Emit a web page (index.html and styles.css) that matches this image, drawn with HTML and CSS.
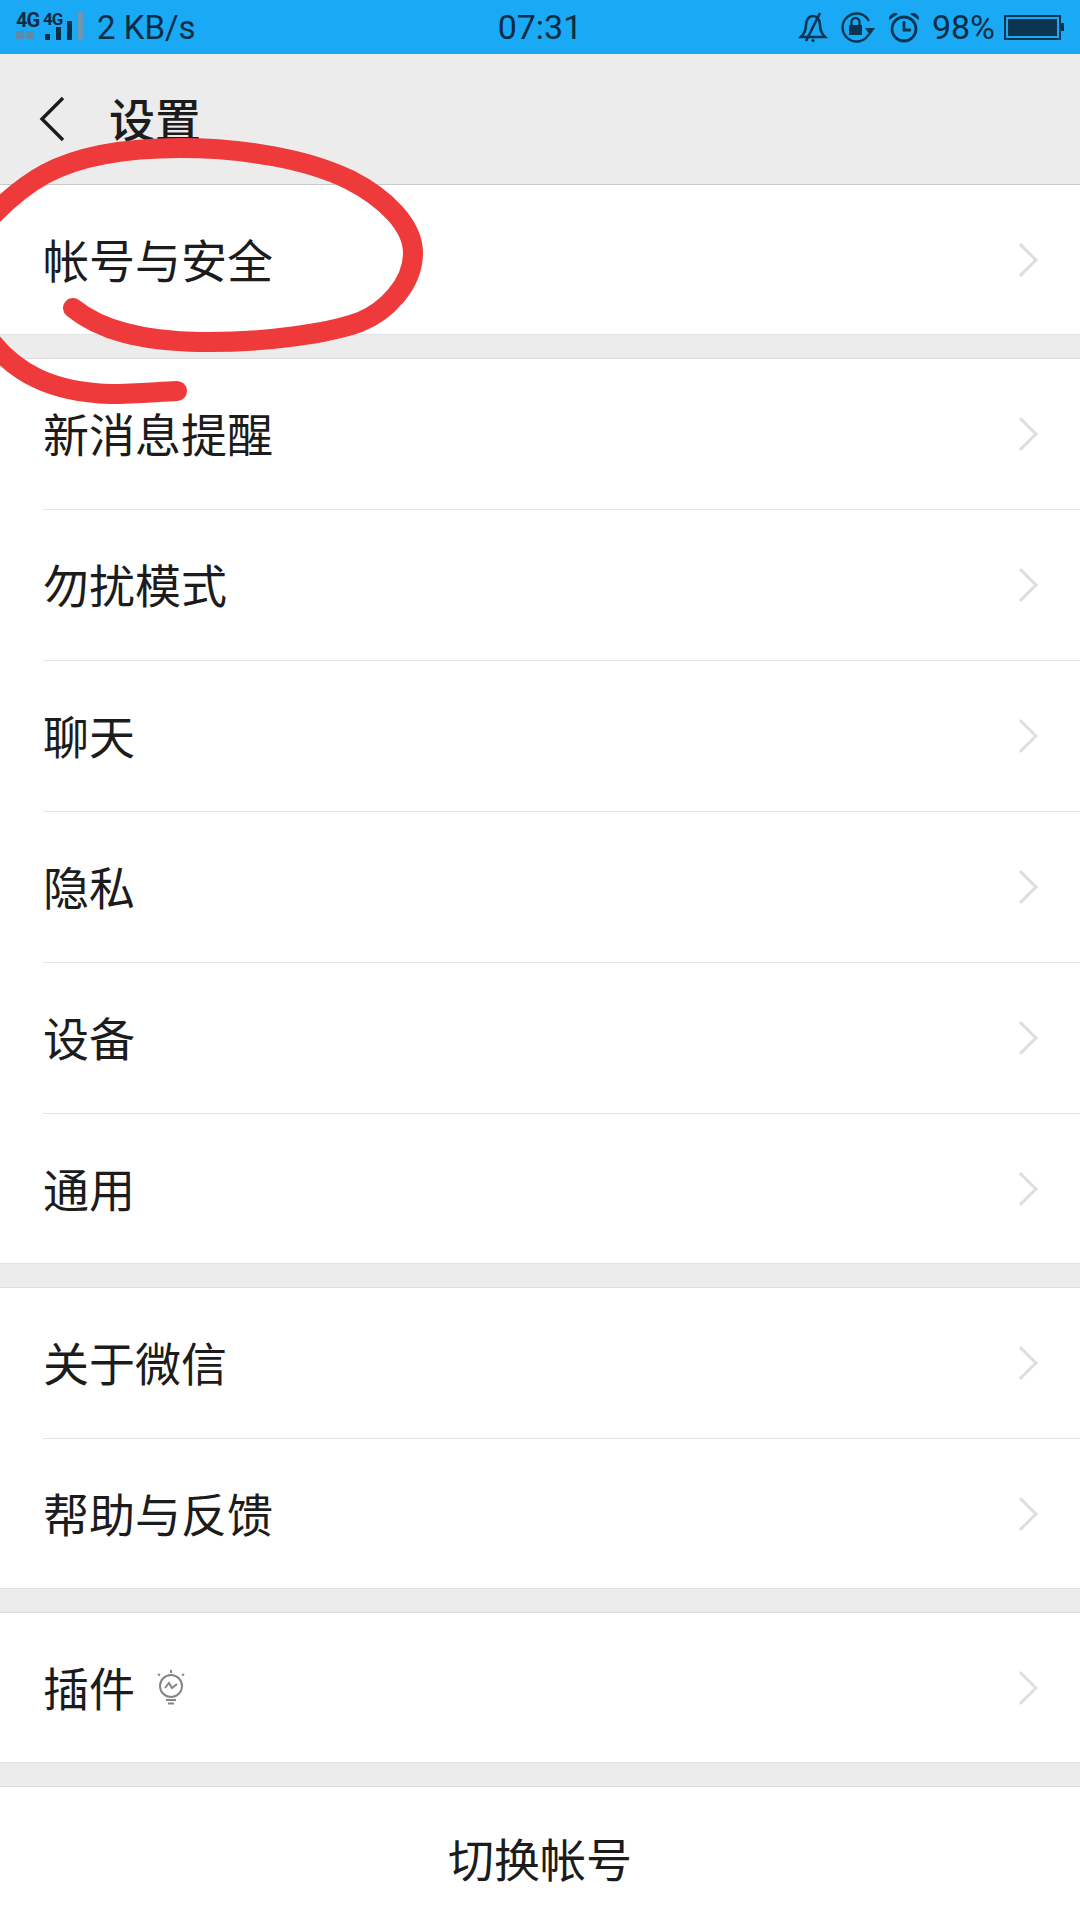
FILE: index.html
```html
<!DOCTYPE html>
<html lang="zh-CN">
<head>
    <meta charset="UTF-8">
    <title>设置</title>
    <link rel="stylesheet" href="styles.css">
</head>
<body>
    <div class="screen">
        <div class="status-bar">
            <div class="status-left">
                <div class="signal">
                    <div class="sim">
                        <span class="sim-label">4G</span>
                        <span class="sim-dots"><i></i><i></i></span>
                    </div>
                    <div class="sim sim-two">
                        <span class="sim-label small">4G</span>
                        <span class="bars"><i class="b1"></i><i class="b2"></i><i class="b3"></i><i class="b4"></i></span>
                    </div>
                </div>
                <span class="speed">2 KB/s</span>
            </div>
            <div class="clock">07:31</div>
            <div class="status-right">
                <svg class="ico-bell" width="30" height="32" viewBox="0 0 30 32" fill="none" stroke="#0a3550" stroke-width="2.6">
                    <path d="M3 26c3-3 5-6 5-12 0-5 3-9 7-9s7 4 7 9c0 6 2 9 5 12z"/>
                    <path d="M22 2 8 30"/>
                    <circle cx="15" cy="29.5" r="1.6" fill="#0a3550" stroke="none"/>
                </svg>
                <svg class="ico-lock" width="38" height="32" viewBox="0 0 38 32" fill="none" stroke="#0a3550" stroke-width="2.4">
                    <path d="M30 23a14 14 0 1 1 0-13"/>
                    <path d="M26 17h10l-5 7z" fill="#0a3550" stroke="none"/>
                    <rect x="10" y="14" width="13" height="10" fill="#0a3550" stroke="none"/>
                    <path d="M12.5 14V11a4 4 0 0 1 8 0v3"/>
                </svg>
                <svg class="ico-alarm" width="32" height="32" viewBox="0 0 32 32" fill="none" stroke="#0a3550" stroke-width="2.8">
                    <circle cx="16" cy="18" r="12"/>
                    <path d="M16 10v9h7"/>
                    <path d="M1 9a6 6 0 0 1 9-6z" fill="#0a3550" stroke="none"/>
                    <path d="M31 9a6 6 0 0 0-9-6z" fill="#0a3550" stroke="none"/>
                </svg>
                <span class="percent">98%</span>
                <div class="battery">
                    <div class="battery-body"><div class="battery-fill"></div></div>
                    <div class="battery-tip"></div>
                </div>
            </div>
        </div>

        <div class="title-bar">
            <svg class="back" width="30" height="46" viewBox="0 0 30 46" fill="none" stroke="#1c1c1c" stroke-width="3.4">
                <path d="M25 2 4 23l21 21"/>
            </svg>
            <h1 class="title">设置</h1>
        </div>

        <div class="group first">
            <div class="row"><span class="label">帐号与安全</span><span class="chev"></span></div>
        </div>
        <div class="group">
            <div class="row"><span class="label">新消息提醒</span><span class="chev"></span></div>
            <div class="row"><span class="label">勿扰模式</span><span class="chev"></span></div>
            <div class="row"><span class="label">聊天</span><span class="chev"></span></div>
            <div class="row"><span class="label">隐私</span><span class="chev"></span></div>
            <div class="row"><span class="label">设备</span><span class="chev"></span></div>
            <div class="row"><span class="label">通用</span><span class="chev"></span></div>
        </div>
        <div class="group">
            <div class="row"><span class="label">关于微信</span><span class="chev"></span></div>
            <div class="row"><span class="label">帮助与反馈</span><span class="chev"></span></div>
        </div>
        <div class="group">
            <div class="row">
                <span class="label">插件</span>
                <svg class="bulb" width="30" height="36" viewBox="0 0 30 36" fill="none" stroke="#858585" stroke-width="2">
                    <circle cx="15" cy="16" r="11"/>
                    <path d="M9 18l4-5 3 5 5-4"/>
                    <path d="M10 30h10M12 33.5h6" stroke-width="2.2"/>
                    <path d="M15 0v3M2 4l2 1.5M28 4l-2 1.5"/>
                </svg>
                <span class="chev"></span>
            </div>
        </div>
        <div class="group last">
            <div class="switch">切换帐号</div>
        </div>

        <!-- red pen scribble on top of the screenshot -->
        <svg class="scribble" width="1080" height="420" viewBox="0 0 1080 420" fill="none" stroke="#ef3a3c" stroke-width="20" stroke-linecap="round" stroke-linejoin="round">
            <path d="M73 308C100 330 140 341 200 342C265 343 330 333 360 322C385 312 413 285 413 253C413 225 385 198 350 180C305 158 240 148 180 148C120 148 75 158 45 174C25 185 10 197 -10 218"/>
            <path d="M-10 340C15 372 50 392 110 394C135 394 155 392 177 391"/>
        </svg>
    </div>
</body>
</html>
```

FILE: styles.css
```css
* {
    box-sizing: border-box;
}
html, body {
    margin: 0;
    padding: 0;
}
body {
    width: 1080px;
    height: 1920px;
    overflow: hidden;
    background-color: #ececec;
    font-family: "Noto Sans CJK SC", "Liberation Sans", sans-serif;
    color: #1c1c1c;
}
.screen {
    position: relative;
    width: 1080px;
    height: 1920px;
    overflow: hidden;
}

/* status bar */
.status-bar {
    height: 54px;
    background-color: #1aaaf5;
    display: grid;
    grid-template-columns: 1fr auto 1fr;
    align-items: center;
    padding: 0 16px;
    color: #0a2c44;
    font-family: Roboto, "Liberation Sans", sans-serif;
}
.status-left {
    display: flex;
    align-items: center;
}
.signal {
    display: flex;
    height: 28px;
}
.sim {
    display: flex;
    flex-direction: column;
    width: 27px;
}
.sim-two {
    width: 40px;
    position: relative;
}
.sim-label {
    font-size: 20px;
    font-weight: 700;
    line-height: 15px;
    letter-spacing: -1px;
}
.sim-label.small {
    font-size: 17px;
    line-height: 13px;
}
.sim-dots {
    display: flex;
    gap: 2px;
    margin-top: 3px;
}
.sim-dots i {
    width: 8px;
    height: 8px;
    background-color: #5d8ba8;
}
.bars {
    position: absolute;
    left: 2px;
    bottom: 1px;
    display: flex;
    align-items: flex-end;
    gap: 6px;
}
.bars i {
    width: 5px;
    background-color: #0a2c44;
}
.bars .b1 { height: 6px; }
.bars .b2 { height: 13px; }
.bars .b3 { height: 19px; }
.bars .b4 { height: 28px; background-color: #6f98b0; }
.speed {
    margin-left: 14px;
    font-size: 33px;
}
.clock {
    font-size: 34px;
}
.status-right {
    display: flex;
    align-items: center;
    justify-content: flex-end;
}
.ico-lock {
    margin-left: 11px;
}
.ico-alarm {
    margin-left: 11px;
}
.percent {
    margin-left: 12px;
    font-size: 34px;
}
.battery {
    display: flex;
    align-items: center;
    margin-left: 9px;
}
.battery-body {
    width: 57px;
    height: 25px;
    border: 2px solid #0a3550;
    padding: 2px;
}
.battery-fill {
    height: 100%;
    background-color: #0b3550;
}
.battery-tip {
    width: 3px;
    height: 8px;
    background-color: #0a3550;
}

/* title */
.title-bar {
    height: 130px;
    display: flex;
    align-items: center;
    padding-left: 38px;
    background-color: #ececec;
}
.title {
    margin: 0 0 5px 41px;
    font-size: 46px;
    font-weight: 500;
    line-height: 1;
}

/* list */
.group {
    margin-top: 23px;
    background-color: #fff;
    box-shadow: inset 0 1px 0 #dcdcdc, inset 0 -1px 0 #e2e2e2;
}
.group.first {
    margin-top: 0;
    box-shadow: inset 0 1px 0 #c8c8c8, inset 0 -1px 0 #e2e2e2;
}
.group.last {
    box-shadow: inset 0 1px 0 #dcdcdc;
}
.row {
    position: relative;
    height: 151px;
    padding: 0 44px 0 43px;
    display: flex;
    align-items: center;
}
.row + .row::before {
    content: "";
    position: absolute;
    top: 0;
    left: 43px;
    right: 0;
    height: 1px;
    background-color: #e4e4e4;
}
.label {
    padding-bottom: 4px;
    font-size: 46px;
    font-weight: 400;
    line-height: 1;
}
.chev {
    margin-left: auto;
    margin-right: 3px;
    width: 24px;
    height: 24px;
    border-top: 3px solid #dedede;
    border-right: 3px solid #dedede;
    transform: rotate(45deg);
}
.bulb {
    margin-left: 21px;
}
.switch {
    height: 134px;
    padding-top: 8px;
    display: flex;
    align-items: center;
    justify-content: center;
    font-size: 46px;
}

/* annotation */
.scribble {
    position: absolute;
    top: 0;
    left: 0;
    pointer-events: none;
}
```
